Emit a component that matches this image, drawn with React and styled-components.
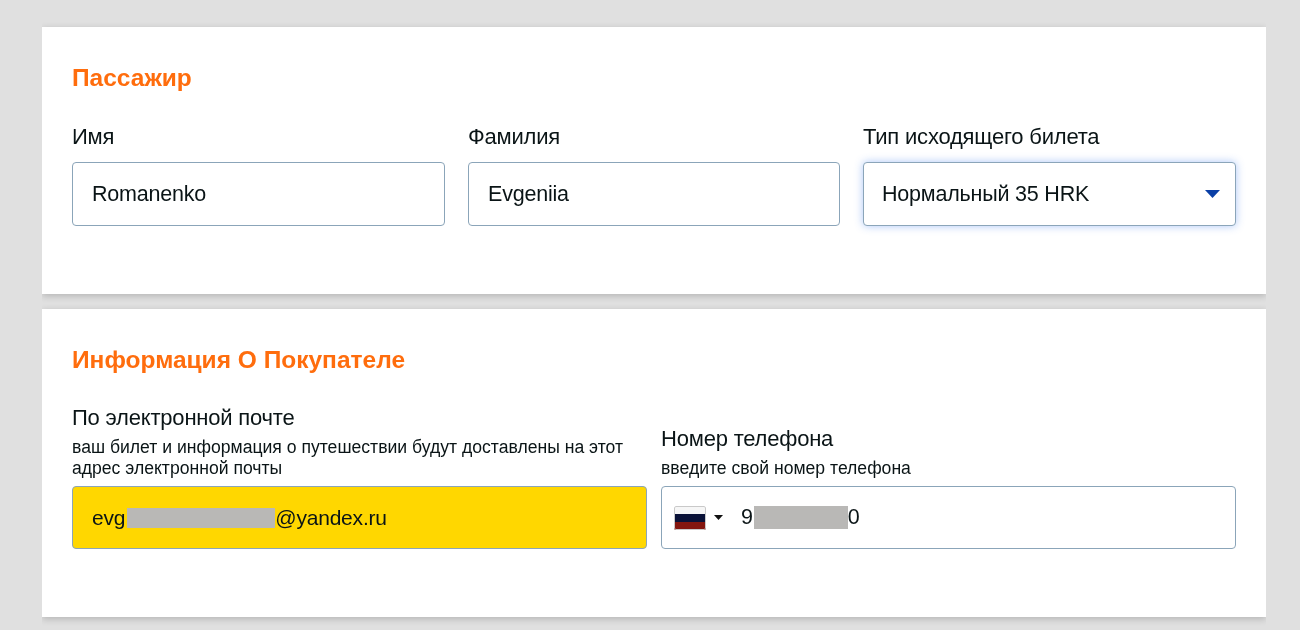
import styled, { createGlobalStyle } from 'styled-components'

const GlobalStyle = createGlobalStyle`
    html, body {
        margin: 0;
        padding: 0;
        background: #e0e0e0;
        font-family: "Liberation Sans", Arial, sans-serif;
        color: #0a1416;
    }
`

// the reference is a slightly upscaled capture, hence the soft edges
const Page = styled.div`
    width: 1224px;
    height: 630px;
    overflow: hidden;
    margin-left: 42px;
    padding-top: 27px;
    box-sizing: border-box;
    display: flex;
    flex-direction: column;
    gap: 15px;
    filter: blur(0.5px);
`

const Card = styled.section`
    background: #fff;
    height: ${props => props.height}px;
    flex: none;
    box-sizing: border-box;
    padding: 38px 30px 0;
    box-shadow: 0 2px 7px rgba(0, 0, 0, 0.2);
`

const CardTitle = styled.h2`
    margin: 0;
    font-size: 24.5px;
    line-height: 25px;
    font-weight: 700;
    color: #ff6d0d;
`

const Row = styled.div`
    display: grid;
    grid-template-columns: ${props => props.columns};
    column-gap: ${props => props.gap}px;
    align-items: end;
    margin-top: ${props => props.top}px;
`

const Label = styled.div`
    font-size: 22px;
    line-height: 24px;
    letter-spacing: -0.2px;
    margin-bottom: 13px;
`

const LabelBlock = styled.div`
    margin-bottom: 7px;

    ${Label} {
        margin-bottom: 7px;
    }
`

const Hint = styled.div`
    font-size: 17.6px;
    line-height: 21px;
`

const Input = styled.div`
    height: ${props => props.height}px;
    box-sizing: border-box;
    display: flex;
    align-items: center;
    padding: 0 19px;
    font-size: ${props => props.size || 21.5}px;
    letter-spacing: -0.2px;
    border: 1px solid #8ba5b9;
    border-radius: 4px;
    background: ${props => props.fill || '#fff'};
    box-shadow: ${props => props.focused ? '0 0 9px rgba(70, 130, 240, 0.45)' : 'none'};
`

const SelectInput = styled(Input)`
    justify-content: space-between;
    padding-left: 18px;
    padding-right: 15px;
`

const Caret = styled.svg`
    width: 15px;
    height: 8px;
    fill: #0a3fa6;
`

const Redacted = styled.span`
    display: inline-block;
    flex: none;
    height: ${props => props.height}px;
    width: ${props => props.width}px;
    margin-left: ${props => props.offset}px;
    background: #b9b8b6;
`

const PhoneInput = styled(Input)`
    padding-left: 12px;
`

const Flag = styled.svg`
    width: 32px;
    height: 24px;
    border-radius: 2px;
    flex: none;
`

const FlagCaret = styled.svg`
    width: 9px;
    height: 5px;
    margin: 0 18px 0 8px;
    fill: #111;
    flex: none;
`

const App = () => {

    return (
        <Page>
            <GlobalStyle />

            <Card height={267}>
                <CardTitle>Пассажир</CardTitle>
                <Row columns="373px 372px 373px" gap={23} top={35}>
                    <div>
                        <Label>Имя</Label>
                        <Input height={64}>Romanenko</Input>
                    </div>
                    <div>
                        <Label>Фамилия</Label>
                        <Input height={64}>Evgeniia</Input>
                    </div>
                    <div>
                        <Label>Тип исходящего билета</Label>
                        <SelectInput height={64} focused>
                            Нормальный 35 HRK
                            <Caret viewBox="0 0 15 8"><path d="M0 0h15L7.5 8z" /></Caret>
                        </SelectInput>
                    </div>
                </Row>
            </Card>

            <Card height={308}>
                <CardTitle>Информация О Покупателе</CardTitle>
                <Row columns="575px 575px" gap={14} top={34}>
                    <div>
                        <LabelBlock>
                            <Label>По электронной почте</Label>
                            <Hint>ваш билет и информация о путешествии будут доставлены на этот адрес электронной почты</Hint>
                        </LabelBlock>
                        <Input height={63} size={21} fill="#ffd700">
                            evg<Redacted width={148} height={20} offset={2} />@yandex.ru
                        </Input>
                    </div>
                    <div>
                        <LabelBlock>
                            <Label>Номер телефона</Label>
                            <Hint>введите свой номер телефона</Hint>
                        </LabelBlock>
                        <PhoneInput height={63}>
                            <Flag viewBox="0 0 32 24">
                                <rect width="32" height="8" fill="#f6f6f6" />
                                <rect y="8" width="32" height="8" fill="#0a1238" />
                                <rect y="16" width="32" height="8" fill="#84160f" />
                                <rect x="0.5" y="0.5" width="31" height="23" rx="1.5" fill="none" stroke="#c9c9c9" />
                            </Flag>
                            <FlagCaret viewBox="0 0 9 5"><path d="M0 0h9L4.5 5z" /></FlagCaret>
                            9<Redacted width={94} height={23} offset={1} />0
                        </PhoneInput>
                    </div>
                </Row>
            </Card>
        </Page>
    )
}

export default App
